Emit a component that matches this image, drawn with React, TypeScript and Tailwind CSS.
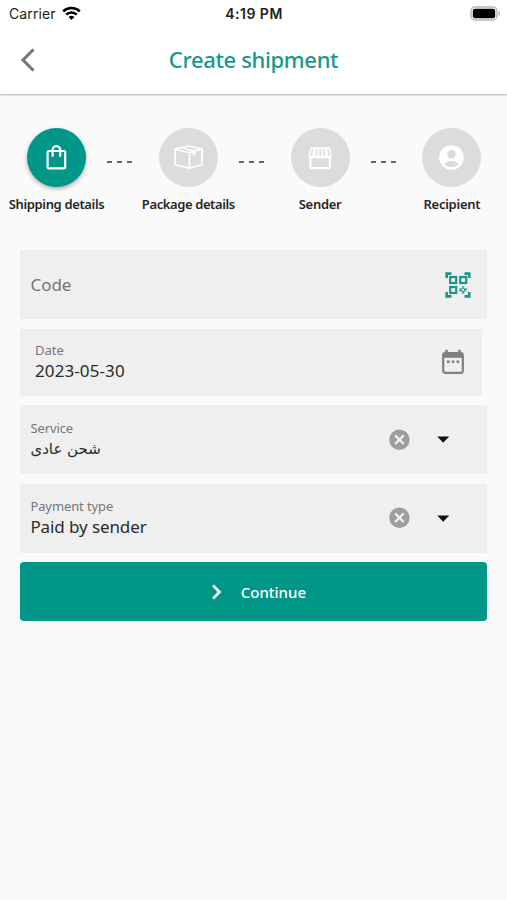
import type { ReactNode } from "react";

function WifiIcon() {
  return (
    <svg className="h-[15px] w-[19px]" viewBox="0 0 19 15" fill="none" stroke="#000" strokeWidth="2.5">
      <path d="M1.2 5.4a11.8 11.8 0 0 1 16.6 0" />
      <path d="M4.2 8.6a7.5 7.5 0 0 1 10.6 0" />
      <path d="M9.5 14 6.6 11.1a4.1 4.1 0 0 1 5.8 0z" fill="#000" stroke="none" />
    </svg>
  );
}

function BatteryIcon() {
  return (
    <svg className="h-[15px] w-[31px]" viewBox="0 0 31 15">
      <rect x="1" y="1" width="26" height="13" rx="4" fill="#fff" stroke="#b5b5b5" strokeWidth="1.4" />
      <rect x="2.8" y="2.8" width="22.4" height="9.4" rx="2" fill="#000" />
      <path d="M28.6 5.2c1.8.6 1.8 4 0 4.6z" fill="#aaa" />
    </svg>
  );
}

function BagIcon() {
  return (
    <svg className="size-[28px]" viewBox="0 0 28 28" fill="none" stroke="#fff" strokeWidth="2.2">
      <rect x="4.6" y="7" width="17.600" height="17.300" rx="1.200" />
      <path d="M9.600 11.800V6a3.800 3.800 0 0 1 7.600 0v5.800" strokeLinecap="round" />
    </svg>
  );
}

function BoxIcon() {
  return (
    <svg className="size-[30px]" viewBox="0 0 30 30" fill="none" stroke="#fff" strokeWidth="1.700" strokeLinejoin="round">
      <path d="M2 6.200 15.500 3 29 6v15.800l-12.500 3.400L2.300 21.800z" />
      <path d="m2 6.200 14.500 3.600L29 6M16.500 9.800v15.400" />
      <path d="m8.500 4.700 13.500 3v4.500l-2.600-1.400V8.400z" fill="#fff" strokeWidth=".9" />
    </svg>
  );
}

function StoreIcon() {
  return (
    <svg className="size-[28px]" viewBox="0 0 28 28" fill="none" stroke="#fff" strokeLinejoin="round">
      <path d="M4.500 13v9.500a1.600 1.600 0 0 0 1.600 1.600h16.200a1.600 1.600 0 0 0 1.600-1.600V13z" strokeWidth="2.200" />
      <path
        d="M6 3.300h16.400a1.600 1.600 0 0 1 1.600 1.200l1.800 6.500a2.800 2.800 0 0 1-2.700 3.200H5.300A2.800 2.800 0 0 1 2.600 11l1.800-6.500A1.600 1.600 0 0 1 6 3.300z"
        fill="#fff"
        stroke="none"
      />
      <path d="M6.400 6 5.200 11M10.900 6l-.600 5M17.500 6l.600 5M22 6l1.200 5M14.200 6v5" stroke="#dcdcdc" strokeWidth="1.900" strokeLinecap="round" />
    </svg>
  );
}

function AccountIcon() {
  return (
    <svg className="size-[30px]" viewBox="0 0 30 30">
      <circle cx="14.500" cy="14.500" r="12.200" fill="#fff" />
      <circle cx="14.500" cy="11.300" r="4.200" fill="#dcdcdc" />
      <ellipse cx="14.500" cy="21" rx="6.800" ry="2.900" fill="#dcdcdc" />
    </svg>
  );
}

function QrIcon() {
  return (
    <svg className="size-[26px]" viewBox="0 0 26 26" fill="none" stroke="#159889" strokeWidth="2.200">
      <path d="M1.700 6V1.600H6.500M19.500 1.600h4.700V6M24.200 20v4.400h-4.700M6.500 24.400H1.700V20" strokeWidth="2.600" />
      <rect x="5.200" y="5" width="6" height="6" />
      <rect x="15.200" y="5" width="6" height="6" />
      <rect x="5.200" y="15" width="6" height="6" />
      <path
        d="m14.500 16.300 4.500 5M17 14.300l4.700 5M14.300 19.300l4.700-5M17 21.500l4.700-5"
        strokeWidth="1.100"
      />
    </svg>
  );
}

function CalendarIcon() {
  return (
    <svg className="h-[26px] w-[24px]" viewBox="0 0 24 26">
      <path d="M5.500 .8V4M18.500 .8V4" stroke="#808080" strokeWidth="2.600" />
      <rect x="2.200" y="4" width="19.600" height="19.800" rx="2" fill="none" stroke="#808080" strokeWidth="2.200" />
      <path d="M2 4h20v4.800H2z" fill="#808080" />
      <path d="M6 12.800h2.500M10.800 12.800h2.500M15.600 12.800h2.500" stroke="#808080" strokeWidth="2.500" />
    </svg>
  );
}

function ClearIcon() {
  return (
    <svg className="size-[22px]" viewBox="0 0 22 22">
      <circle cx="11.400" cy="10.700" r="10.200" fill="#9e9e9e" />
      <path d="m7.100 6.400 8.600 8.600m0-8.600-8.600 8.600" stroke="#f0f0f0" strokeWidth="2.300" />
    </svg>
  );
}

function Step({ icon, label, spacing, active }: { icon: ReactNode; label: string; spacing: string; active?: boolean }) {
  return (
    <div className="flex w-[59px] flex-col items-center">
      <div
        className={`flex size-[59px] items-center justify-center rounded-full ${
          active ? "bg-[#009688] shadow-[0_2px_4px_rgba(0,0,0,0.3)]" : "bg-[#dcdcdc]"
        }`}
      >
        {icon}
      </div>
      <span className={`mt-[7px] whitespace-nowrap text-[13px] leading-5 font-semibold text-[#262626] ${spacing}`}>{label}</span>
    </div>
  );
}

function Dashes() {
  return (
    <div className="mt-[32.5px] flex w-[72.8px] gap-[5px] pl-[21px]">
      <i className="h-[2.5px] w-[5px] bg-[#666]" />
      <i className="h-[2.5px] w-[5px] bg-[#666]" />
      <i className="h-[2.5px] w-[5px] bg-[#666]" />
    </div>
  );
}

function SelectField({ label, spacing, children }: { label: string; spacing: string; children: ReactNode }) {
  return (
    <div className="flex h-[69px] items-center bg-[#efefef] pr-[37px] pl-[10px]">
      <div className="flex flex-1 flex-col">
        <span className={`text-[13px] leading-[18px] text-[#777] ${spacing}`}>{label}</span>
        {children}
      </div>
      <ClearIcon />
      <svg className="ml-[26px] h-[7px] w-[14px]" viewBox="0 0 14 7">
        <path d="M1.200 .5h12L7.200 6.700z" fill="#111" />
      </svg>
    </div>
  );
}

export default function App() {
  return (
    <div className="flex h-[900px] w-[507px] flex-col overflow-hidden bg-[#fafafa] font-['Noto_Sans','Open_Sans',sans-serif]">
      <header className="h-[94px] shrink-0 bg-white shadow-[0_1px_2px_rgba(0,0,0,0.3)]">
        <div className="grid h-[27px] grid-cols-3 items-center pr-[6px] pl-[9px] font-['Inter',sans-serif] text-[14px] text-[#222]">
          <div className="flex items-center gap-[6px]">
            <span className="tracking-[0.1px]">Carrier</span>
            <WifiIcon />
          </div>
          <span className="-ml-[2px] text-center text-[14px] font-semibold tracking-[0.5px]">4:19 PM</span>
          <div className="flex justify-end">
            <BatteryIcon />
          </div>
        </div>
        <div className="grid h-[66px] grid-cols-[60px_1fr_60px] items-center">
          <svg className="ml-[19px] h-[26px] w-[18px]" viewBox="0 0 18 26" fill="none" stroke="#757575" strokeWidth="3">
            <path d="M14.500 2.500 4 13l10.500 10.500" />
          </svg>
          <h1 className="-mt-[2px] text-center text-[22px] leading-8 font-medium tracking-[-0.35px] text-[#16998b]">
            Create shipment
          </h1>
        </div>
      </header>

      <nav className="mt-[34px] flex pl-[27px]">
        <Step active icon={<BagIcon />} label="Shipping details" spacing="tracking-[-0.35px]" />
        <Dashes />
        <Step icon={<BoxIcon />} label="Package details" spacing="tracking-[-0.4px]" />
        <Dashes />
        <Step icon={<StoreIcon />} label="Sender" spacing="tracking-[-0.3px]" />
        <Dashes />
        <Step icon={<AccountIcon />} label="Recipient" spacing="tracking-[-0.25px]" />
      </nav>

      <main className="mt-[36px] flex flex-col gap-[9.5px] pr-[19.6px] pl-[20.4px]">
        <div className="flex h-[69px] items-center justify-between bg-[#efefef] pr-[16px] pl-[10px]">
          <span className="text-[17px] text-[#757575]">Code</span>
          <QrIcon />
        </div>
        <div className="mr-[5px] flex h-[67px] items-center justify-between bg-[#efefef] pr-[17px] pl-[14.6px]">
          <div className="-mt-[1px] flex flex-col">
            <span className="text-[13px] leading-[18px] text-[#777]">Date</span>
            <span className="text-[17px] leading-6 tracking-[0.1px] text-[#2b2b2b]">2023-05-30</span>
          </div>
          <CalendarIcon />
        </div>
        <SelectField label="Service" spacing="tracking-[-0.1px]">
          <span className="self-start font-['DejaVu_Sans',sans-serif] text-[15px] leading-6 text-[#2b2b2b]" dir="rtl">
            شحن عادى
          </span>
        </SelectField>
        <SelectField label="Payment type" spacing="tracking-[-0.1px]">
          <span className="text-[17px] leading-6 tracking-[-0.1px] text-[#2b2b2b]">Paid by sender</span>
        </SelectField>
        <button className="flex h-[59px] items-center justify-center gap-[19px] rounded-[4px] bg-[#009688] pt-[1px] pl-[9px] text-[15px] font-medium text-white">
          <svg className="h-[16px] w-[11px]" viewBox="0 0 11 16" fill="none" stroke="#fff" strokeWidth="2.700">
            <path d="m2 1.500 6.500 6.500L2 14.500" />
          </svg>
          Continue
        </button>
      </main>
    </div>
  );
}
